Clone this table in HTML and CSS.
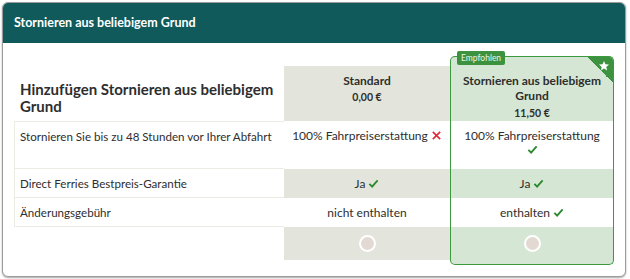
FILE: index.html
```html
<!DOCTYPE html>
<html lang="de">
<head>
    <meta charset="UTF-8">
    <meta name="viewport" content="width=device-width, initial-scale=1.0">
    <title>Stornieren aus beliebigem Grund</title>
    <link rel="stylesheet" href="styles.css">
</head>
<body>

    <div class="card">
        <div class="card-header">Stornieren aus beliebigem Grund</div>

        <div class="compare">
            <div class="cell title">Hinzufügen Stornieren aus beliebigem Grund</div>
            <div class="cell plan std head">
                <div class="plan-name">Standard</div>
                <div class="plan-price">0,00 €</div>
            </div>
            <div class="cell plan rec head">
                <span class="badge">Empfohlen</span>
                <span class="corner">
                    <svg viewBox="0 0 24 24" width="12" height="12"><path fill="#fff" d="M12 2l2.9 6.6 7.1.6-5.4 4.7 1.6 7-6.2-3.7-6.2 3.7 1.6-7L2 9.2l7.1-.6z"/></svg>
                </span>
                <div class="plan-name">Stornieren aus beliebigem Grund</div>
                <div class="plan-price">11,50 €</div>
            </div>

            <div class="cell label first">Stornieren Sie bis zu 48 Stunden vor Ihrer Abfahrt</div>
            <div class="cell plan">100% Fahrpreiserstattung <svg class="icon" viewBox="0 0 12 12" width="11" height="11"><path d="M2 2l8 8M10 2l-8 8" stroke="#e0283a" stroke-width="1.8" fill="none"/></svg></div>
            <div class="cell plan rec">100% Fahrpreiserstattung<br><svg class="icon" viewBox="0 0 12 12" width="11" height="11"><path d="M1.5 6.5l3 3 6-7" stroke="#2b8a2e" stroke-width="2" fill="none"/></svg></div>

            <div class="cell label">Direct Ferries Bestpreis-Garantie</div>
            <div class="cell plan std mid">Ja <svg class="icon" viewBox="0 0 12 12" width="11" height="11"><path d="M1.5 6.5l3 3 6-7" stroke="#2b8a2e" stroke-width="2" fill="none"/></svg></div>
            <div class="cell plan rec tint mid">Ja <svg class="icon" viewBox="0 0 12 12" width="11" height="11"><path d="M1.5 6.5l3 3 6-7" stroke="#2b8a2e" stroke-width="2" fill="none"/></svg></div>

            <div class="cell label">Änderungsgebühr</div>
            <div class="cell plan mid">nicht enthalten</div>
            <div class="cell plan rec mid">enthalten <svg class="icon" viewBox="0 0 12 12" width="11" height="11"><path d="M1.5 6.5l3 3 6-7" stroke="#2b8a2e" stroke-width="2" fill="none"/></svg></div>

            <div class="cell empty"></div>
            <div class="cell plan std pick"><span class="radio"></span></div>
            <div class="cell plan rec tint pick foot"><span class="radio"></span></div>
        </div>
    </div>

</body>
</html>
```

FILE: styles.css
```css
body {
    margin: 0;
    font-family: Lato, "Open Sans", sans-serif;
    color: #2e2e2e;
    background-color: #fff;
}
.card {
    margin: 2px;
    width: 622px;
    height: 273px;
    border: 1px solid #9c9c9c;
    border-radius: 6px;
    box-shadow: 0 1px 2px rgba(0, 0, 0, 0.35);
    overflow: hidden;
    background-color: #fff;
}
.card-header {
    height: 40px;
    line-height: 40px;
    padding-left: 11px;
    background-color: #105a5b;
    color: #fff;
    font-size: 12.5px;
    font-weight: 700;
}
.compare {
    display: grid;
    grid-template-columns: 270px 166px 164px;
    grid-template-rows: 55px 48px 29px 29px 33px;
    margin: 23px 0 0 11px;
    font-size: 12px;
}
.cell {
    padding: 8px 6px 0;
    line-height: 14px;
}
.title {
    display: flex;
    align-items: flex-end;
    padding-bottom: 6px;
    font-size: 15px;
    font-weight: 700;
    line-height: 17px;
}
.label {
    padding-left: 5px;
    font-size: 11.6px;
    white-space: nowrap;
    border-left: 1px solid #ecece5;
    border-bottom: 1px solid #ecece5;
}
.label.first {
    border-top: 1px solid #ecece5;
}
.plan {
    text-align: center;
}
.std {
    background-color: #e3e5dc;
}
.head {
    padding-top: 7px;
}
.plan-name {
    font-weight: 700;
    line-height: 15px;
}
.plan-price {
    font-size: 10.5px;
    font-weight: 700;
    margin-top: 2px;
}
.mid {
    padding-top: 8px;
}
.icon {
    vertical-align: -1px;
}

/* recommended column: framed, tinted box */
.rec {
    border-left: 1.5px solid #3a9a3d;
    border-right: 1.5px solid #3a9a3d;
}
.rec.head,
.tint {
    background-color: #d5e6d4;
}
.rec.head {
    position: relative;
    margin-top: -10px;
    padding-top: 16px;
    border-top: 1.5px solid #3a9a3d;
    border-radius: 5px 5px 0 0;
}
.rec.head .plan-name {
    padding: 0 4px;
}
.rec.head .plan-price {
    margin-top: 3px;
}
.badge {
    position: absolute;
    top: -6px;
    left: 6px;
    padding: 0 4px;
    height: 14px;
    line-height: 14px;
    font-size: 8.5px;
    font-weight: 400;
    color: #e8f5e8;
    background-color: #3c923f;
    border-radius: 2px;
}
.corner {
    position: absolute;
    top: 0;
    right: 0;
    width: 26px;
    height: 26px;
    background: linear-gradient(45deg, transparent 50%, #3c923f 50%);
    border-top-right-radius: 4px;
}
.corner svg {
    position: absolute;
    top: 3px;
    right: 3px;
}
.pick {
    display: flex;
    align-items: center;
    justify-content: center;
    padding: 0;
}
.foot {
    margin-bottom: -5px;
    padding-bottom: 5px;
    border-bottom: 1.5px solid #3a9a3d;
    border-radius: 0 0 5px 5px;
}
.radio {
    width: 13px;
    height: 13px;
    border: 2px solid #fff;
    border-radius: 50%;
    background-color: #e2dad2;
}
```
